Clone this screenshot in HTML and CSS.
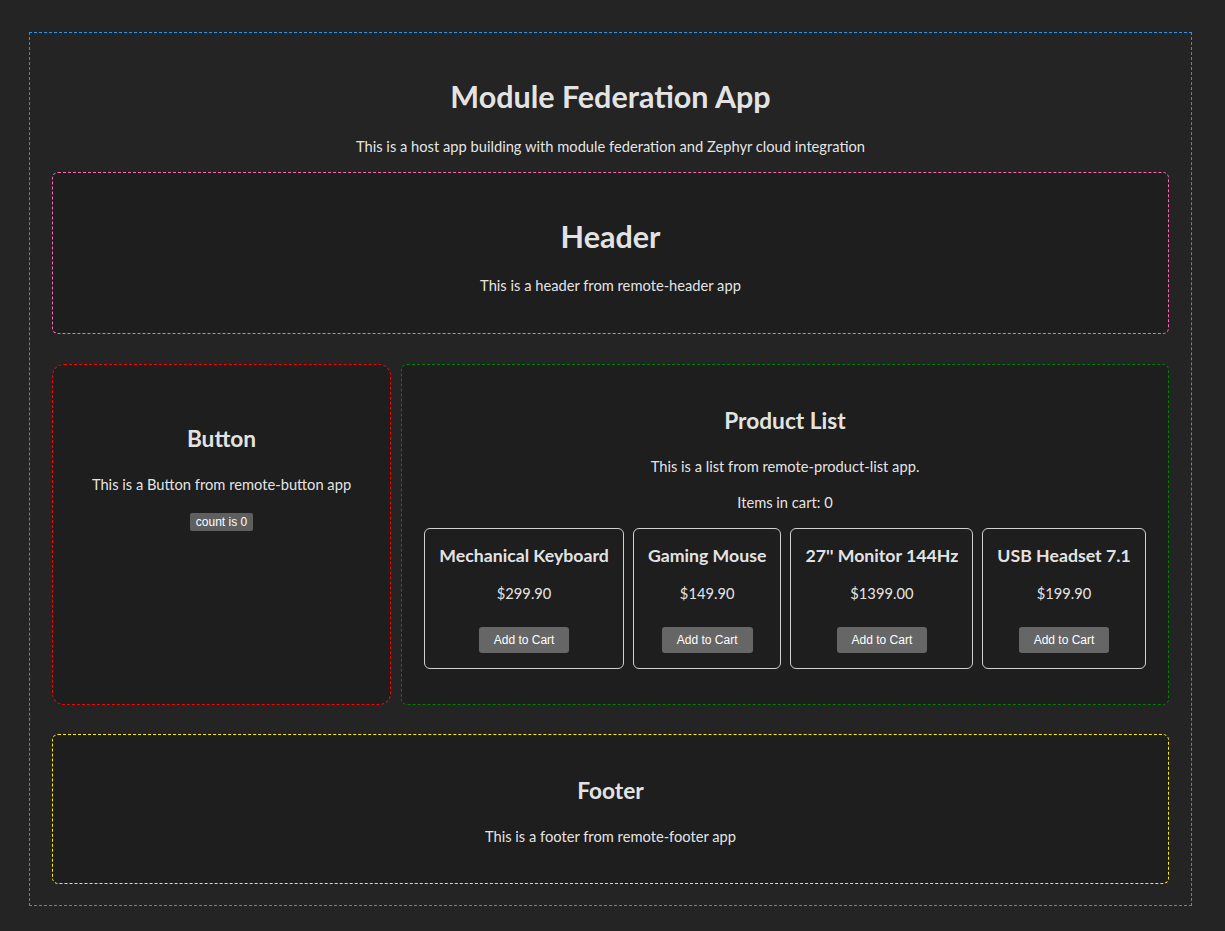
FILE: index.html
```html
<!DOCTYPE html>
<html lang="en">
  <head>
    <meta charset="UTF-8" />
    <meta name="viewport" content="width=device-width, initial-scale=1.0" />
    <title>Module Federation App</title>
    <link rel="stylesheet" href="styles.css">
  </head>
  <body>
    <div class="host">
      <h1>Module Federation App</h1>
      <p>This is a host app building with module federation and Zephyr cloud integration</p>

      <div class="remote remote-header">
        <h2>Header</h2>
        <p>This is a header from remote-header app</p>
      </div>

      <div class="remote-row">
        <div class="remote remote-button">
          <h2>Button</h2>
          <p>This is a Button from remote-button app</p>
          <button class="count-btn">count is 0</button>
        </div>

        <div class="remote remote-products">
          <h2>Product List</h2>
          <p>This is a list from remote-product-list app.</p>
          <p>Items in cart: 0</p>
          <div class="product-grid">
            <div class="product-card">
              <h3>Mechanical Keyboard</h3>
              <p>$299.90</p>
              <button class="cart-btn">Add to Cart</button>
            </div>
            <div class="product-card">
              <h3>Gaming Mouse</h3>
              <p>$149.90</p>
              <button class="cart-btn">Add to Cart</button>
            </div>
            <div class="product-card">
              <h3>27'' Monitor 144Hz</h3>
              <p>$1399.00</p>
              <button class="cart-btn">Add to Cart</button>
            </div>
            <div class="product-card">
              <h3>USB Headset 7.1</h3>
              <p>$199.90</p>
              <button class="cart-btn">Add to Cart</button>
            </div>
          </div>
        </div>
      </div>

      <div class="remote remote-footer">
        <h2>Footer</h2>
        <p>This is a footer from remote-footer app</p>
      </div>
    </div>
  </body>
</html>
```

FILE: styles.css
```css
body {
  margin: 0;
  padding: 32px 33px 25px 29px;
  background: #242424;
  color: rgba(255, 255, 255, 0.9);
  font-family: Lato, "Noto Sans", sans-serif;
  font-size: 14.7px;
  line-height: 1.45;
}
.host {
  border: 1px dashed #2196f3;
  padding: 22px 22px 21px;
  text-align: center;
}
h1 {
  font-size: 30.5px;
  line-height: 1.2;
  margin: 23px 0 21px;
}
h2 {
  font-size: 22.7px;
  margin: 18px 0;
}
h3 {
  font-size: 17.7px;
  margin: 14px 0;
  white-space: nowrap;
}
p {
  margin: 14.7px 0;
}
.remote {
  background: #1e1e1e;
  border: 1px dashed;
  border-radius: 6px;
  padding: 22px;
}
.remote-header {
  border-color: #ff69b4;
}
.remote-header h2 {
  font-size: 30.5px;
  line-height: 1.2;
  margin: 23px 0 21px;
}
.remote-row {
  display: flex;
  gap: 10px;
  margin: 30px 0 29px;
}
.remote-button {
  box-sizing: border-box;
  flex: 0 0 339px;
  border-color: red;
  border-radius: 12px;
  padding: 40px 20px;
  white-space: nowrap;
}
.remote-products {
  flex: 1;
  min-width: 0;
  border-color: green;
}
.remote-footer {
  border-color: #ffee00;
  padding-bottom: 21px;
}
.product-grid {
  display: flex;
  justify-content: center;
  gap: 9px;
  margin-bottom: 13px;
}
.product-card {
  border: 1px solid #d0d0d0;
  border-radius: 6px;
  padding: 0 14px 15px;
}
.product-card p {
  margin-bottom: 22px;
}
button {
  font-family: "Liberation Sans", Arial, sans-serif;
  font-size: 12px;
  color: #fff;
  background: #666;
  border: none;
  cursor: pointer;
}
.count-btn {
  padding: 2px 6px;
  border-radius: 2px;
  margin-top: 3px;
  background: #5f5f5f;
}
.cart-btn {
  padding: 6px 15px;
  border-radius: 3px;
}
```
